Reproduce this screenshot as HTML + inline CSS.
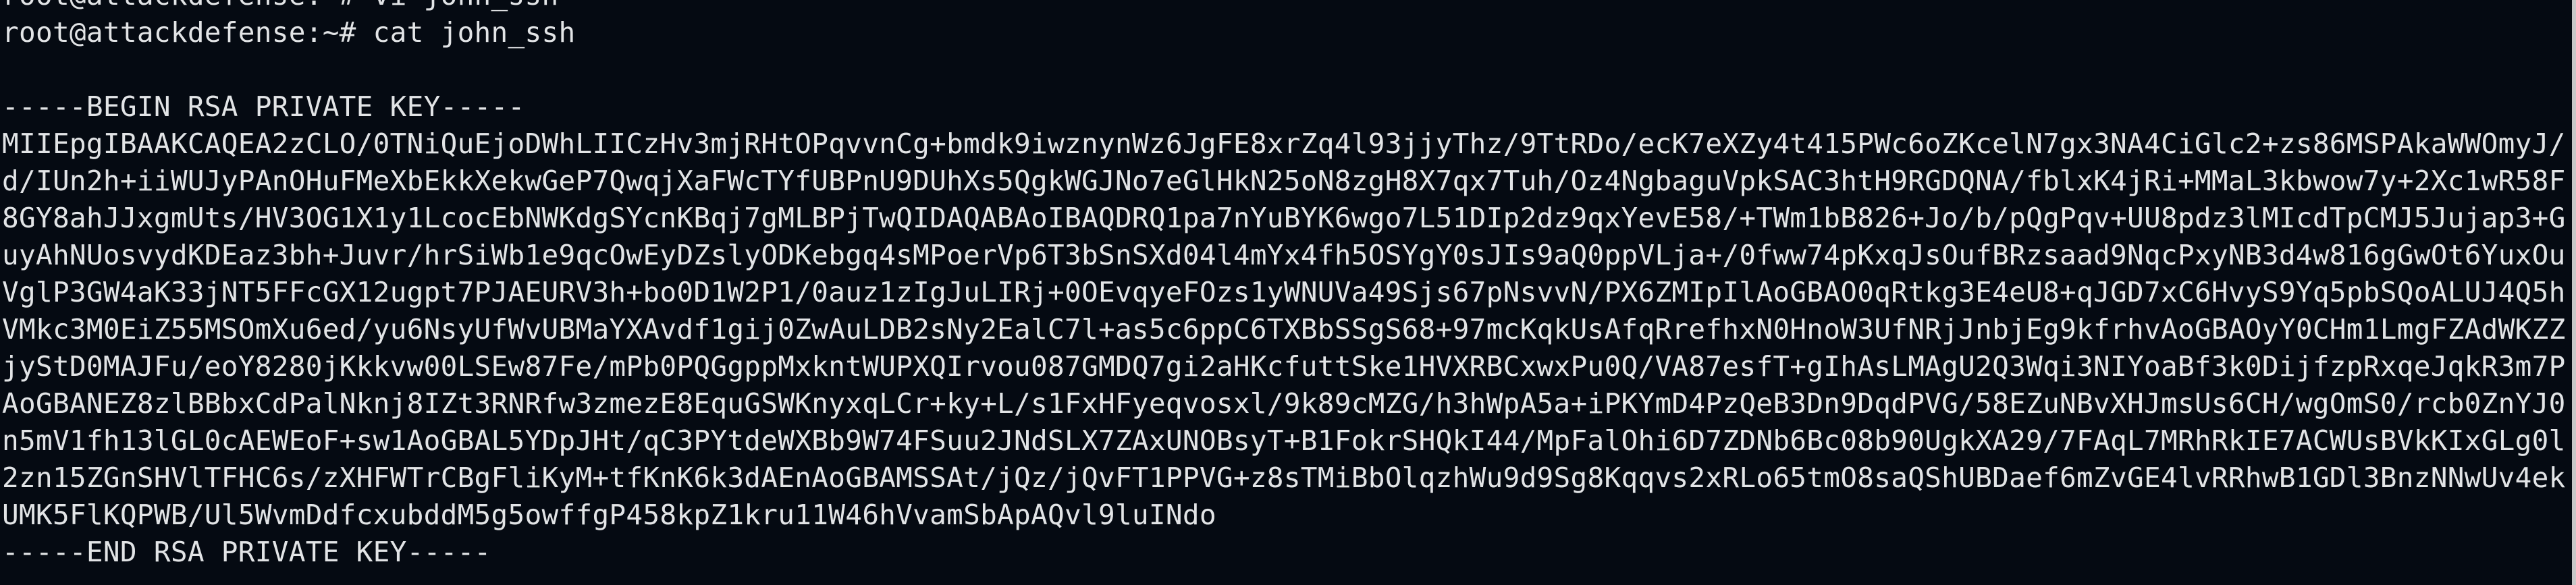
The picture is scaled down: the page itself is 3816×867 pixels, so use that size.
<!DOCTYPE html>
<html><head><meta charset="utf-8"><style>
html,body{margin:0;padding:0;width:3816px;height:867px;overflow:hidden;background:#050a12;}
pre{position:absolute;left:3px;top:-34px;margin:0;font-family:"DejaVu Sans Mono","Liberation Mono",monospace;font-size:41px;line-height:55px;letter-spacing:0.3px;color:#e2e4e6;white-space:pre;}
.bar{position:absolute;left:3810px;top:0;width:6px;height:867px;background:#c8c8c8;}
</style></head><body>
<pre>root@attackdefense:~# vi john_ssh
root@attackdefense:~# cat john_ssh

-----BEGIN RSA PRIVATE KEY-----
MIIEpgIBAAKCAQEA2zCLO/0TNiQuEjoDWhLIICzHv3mjRHtOPqvvnCg+bmdk9iwznynWz6JgFE8xrZq4l93jjyThz/9TtRDo/ecK7eXZy4t415PWc6oZKcelN7gx3NA4CiGlc2+zs86MSPAkaWWOmyJ/
d/IUn2h+iiWUJyPAnOHuFMeXbEkkXekwGeP7QwqjXaFWcTYfUBPnU9DUhXs5QgkWGJNo7eGlHkN25oN8zgH8X7qx7Tuh/Oz4NgbaguVpkSAC3htH9RGDQNA/fblxK4jRi+MMaL3kbwow7y+2Xc1wR58F
8GY8ahJJxgmUts/HV3OG1X1y1LcocEbNWKdgSYcnKBqj7gMLBPjTwQIDAQABAoIBAQDRQ1pa7nYuBYK6wgo7L51DIp2dz9qxYevE58/+TWm1bB826+Jo/b/pQgPqv+UU8pdz3lMIcdTpCMJ5Jujap3+G
uyAhNUosvydKDEaz3bh+Juvr/hrSiWb1e9qcOwEyDZslyODKebgq4sMPoerVp6T3bSnSXd04l4mYx4fh5OSYgY0sJIs9aQ0ppVLja+/0fww74pKxqJsOufBRzsaad9NqcPxyNB3d4w816gGwOt6YuxOu
VglP3GW4aK33jNT5FFcGX12ugpt7PJAEURV3h+bo0D1W2P1/0auz1zIgJuLIRj+0OEvqyeFOzs1yWNUVa49Sjs67pNsvvN/PX6ZMIpIlAoGBAO0qRtkg3E4eU8+qJGD7xC6HvyS9Yq5pbSQoALUJ4Q5h
VMkc3M0EiZ55MSOmXu6ed/yu6NsyUfWvUBMaYXAvdf1gij0ZwAuLDB2sNy2EalC7l+as5c6ppC6TXBbSSgS68+97mcKqkUsAfqRrefhxN0HnoW3UfNRjJnbjEg9kfrhvAoGBAOyY0CHm1LmgFZAdWKZZ
jyStD0MAJFu/eoY8280jKkkvw00LSEw87Fe/mPb0PQGgppMxkntWUPXQIrvou087GMDQ7gi2aHKcfuttSke1HVXRBCxwxPu0Q/VA87esfT+gIhAsLMAgU2Q3Wqi3NIYoaBf3k0DijfzpRxqeJqkR3m7P
AoGBANEZ8zlBBbxCdPalNknj8IZt3RNRfw3zmezE8EquGSWKnyxqLCr+ky+L/s1FxHFyeqvosxl/9k89cMZG/h3hWpA5a+iPKYmD4PzQeB3Dn9DqdPVG/58EZuNBvXHJmsUs6CH/wgOmS0/rcb0ZnYJ0
n5mV1fh13lGL0cAEWEoF+sw1AoGBAL5YDpJHt/qC3PYtdeWXBb9W74FSuu2JNdSLX7ZAxUNOBsyT+B1FokrSHQkI44/MpFalOhi6D7ZDNb6Bc08b90UgkXA29/7FAqL7MRhRkIE7ACWUsBVkKIxGLg0l
2zn15ZGnSHVlTFHC6s/zXHFWTrCBgFliKyM+tfKnK6k3dAEnAoGBAMSSAt/jQz/jQvFT1PPVG+z8sTMiBbOlqzhWu9d9Sg8Kqqvs2xRLo65tmO8saQShUBDaef6mZvGE4lvRRhwB1GDl3BnzNNwUv4ek
UMK5FlKQPWB/Ul5WvmDdfcxubddM5g5owffgP458kpZ1kru11W46hVvamSbApAQvl9luINdo
-----END RSA PRIVATE KEY-----</pre>
<div class="bar"></div>
</body></html>
